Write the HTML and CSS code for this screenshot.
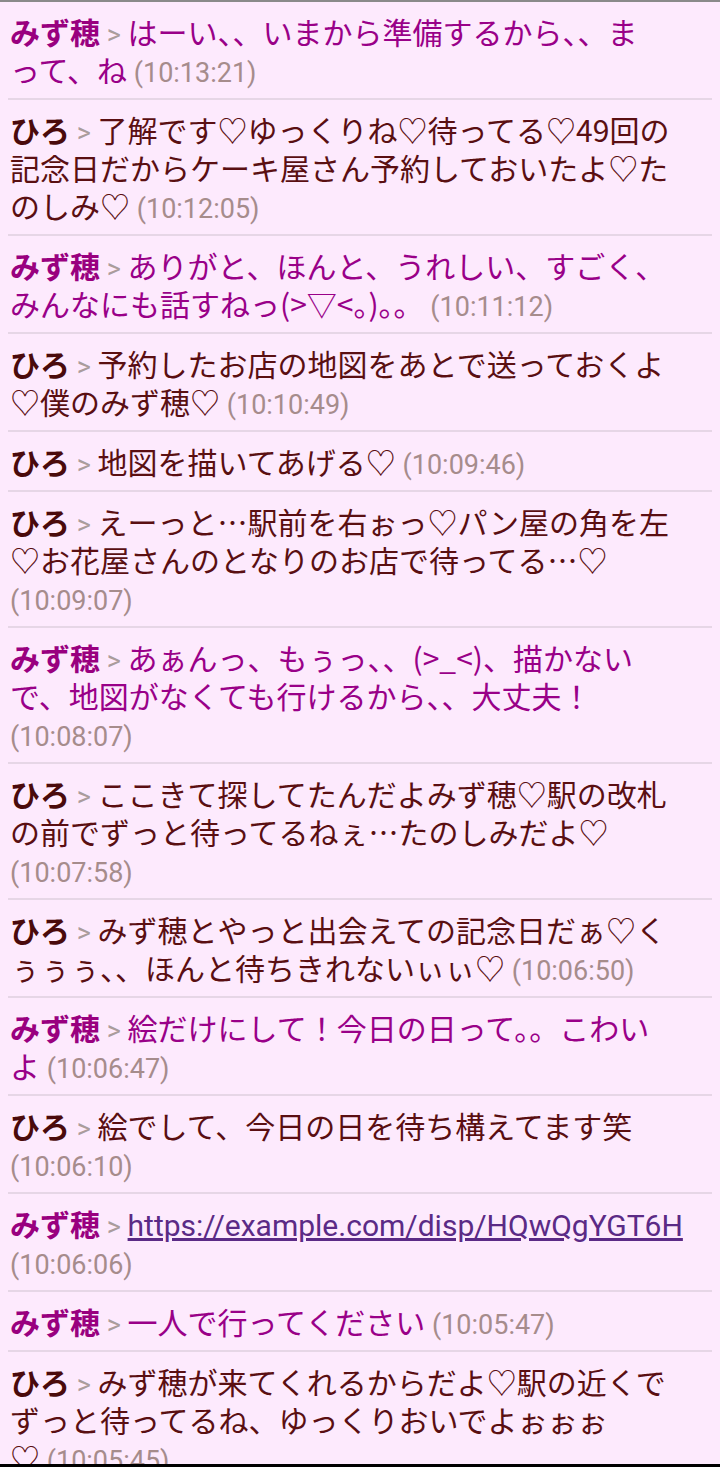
FILE: index.html
```html
<!DOCTYPE html>
<html lang="ja">
<head>
<meta charset="utf-8">
<title>チャットログ</title>
<link rel="stylesheet" href="styles.css">
</head>
<body>
<div class="log">
  <div class="msg her"><span class="name">みず穂</span> <span class="gt">&gt;</span> はーい、、いまから準備するから、、ま<br>って、ね <span class="time">(10:13:21)</span></div>
  <div class="msg him"><span class="name">ひろ</span> <span class="gt">&gt;</span> 了解です♡ゆっくりね♡待ってる♡49回の<br>記念日だからケーキ屋さん予約しておいたよ♡た<br>のしみ♡ <span class="time">(10:12:05)</span></div>
  <div class="msg her"><span class="name">みず穂</span> <span class="gt">&gt;</span> ありがと、ほんと、うれしい、すごく、<br>みんなにも話すねっ(&gt;▽&lt;。)。。 <span class="time">(10:11:12)</span></div>
  <div class="msg him"><span class="name">ひろ</span> <span class="gt">&gt;</span> 予約したお店の地図をあとで送っておくよ<br>♡僕のみず穂♡ <span class="time">(10:10:49)</span></div>
  <div class="msg him"><span class="name">ひろ</span> <span class="gt">&gt;</span> 地図を描いてあげる♡ <span class="time">(10:09:46)</span></div>
  <div class="msg him"><span class="name">ひろ</span> <span class="gt">&gt;</span> えーっと…駅前を右ぉっ♡パン屋の角を左<br>♡お花屋さんのとなりのお店で待ってる…♡<br><span class="time">(10:09:07)</span></div>
  <div class="msg her"><span class="name">みず穂</span> <span class="gt">&gt;</span> あぁんっ、もぅっ、、(&gt;_&lt;)、描かない<br>で、地図がなくても行けるから、、大丈夫！<br><span class="time">(10:08:07)</span></div>
  <div class="msg him"><span class="name">ひろ</span> <span class="gt">&gt;</span> ここきて探してたんだよみず穂♡駅の改札<br>の前でずっと待ってるねぇ…たのしみだよ♡<br><span class="time">(10:07:58)</span></div>
  <div class="msg him"><span class="name">ひろ</span> <span class="gt">&gt;</span> みず穂とやっと出会えての記念日だぁ♡く<br>ぅぅぅ、、ほんと待ちきれないぃぃ♡ <span class="time">(10:06:50)</span></div>
  <div class="msg her"><span class="name">みず穂</span> <span class="gt">&gt;</span> 絵だけにして！今日の日って。。こわい<br>よ <span class="time">(10:06:47)</span></div>
  <div class="msg him"><span class="name">ひろ</span> <span class="gt">&gt;</span> 絵でして、今日の日を待ち構えてます笑<br><span class="time">(10:06:10)</span></div>
  <div class="msg her"><span class="name">みず穂</span> <span class="gt">&gt;</span> <a class="link" href="#">https://example.com/disp/HQwQgYGT6H</a><br><span class="time">(10:06:06)</span></div>
  <div class="msg her"><span class="name">みず穂</span> <span class="gt">&gt;</span> 一人で行ってください <span class="time">(10:05:47)</span></div>
  <div class="msg him"><span class="name">ひろ</span> <span class="gt">&gt;</span> みず穂が来てくれるからだよ♡駅の近くで<br>ずっと待ってるね、ゆっくりおいでよぉぉぉ<br>♡ <span class="time">(10:05:45)</span></div>
</div>
<div class="navbar"></div>
</body>
</html>
```

FILE: styles.css
```css
html, body {
  margin: 0;
  padding: 0;
  background: #fdeafd;
}

body {
  width: 720px;
  height: 1467px;
  overflow: hidden;
  position: relative;
  border-top: 2px solid #8a8a8a;
  box-sizing: border-box;
  font-family: "Noto Sans CJK JP", "Noto Sans", Roboto, sans-serif;
}

.log {
  display: flex;
  flex-direction: column;
}

.msg {
  font-size: 30px;
  line-height: 38px;
  padding: 10px 0 10px 2px;
  margin: 0 8px;
  border-bottom: 2px solid #e6d6e6;
  white-space: nowrap;
}

.msg span,
.msg a {
  line-height: 1;
}

.her { color: #990088; }
.him { color: #5a0f12; }

.name {
  font-weight: 700;
}

.her .name { color: #99007f; }
.him .name { color: #4a0a0c; }

.gt {
  color: #aa9c9c;
  font-family: Roboto, "Noto Sans", sans-serif;
  font-size: 27px;
}

.time {
  color: #a68c8c;
  font-family: Roboto, "Noto Sans", sans-serif;
  font-size: 27px;
}

.link {
  color: #5b2a86;
  text-decoration: underline;
  font-family: Roboto, "Noto Sans", sans-serif;
  font-size: 30px;
}

.navbar {
  position: absolute;
  left: 0;
  right: 0;
  bottom: 0;
  height: 3px;
  background: #000;
}
```
